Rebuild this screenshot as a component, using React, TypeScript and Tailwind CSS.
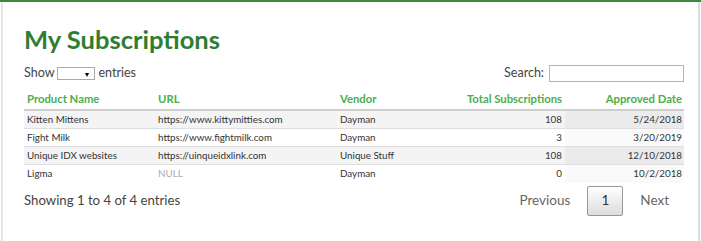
const rows = [
  { name: 'Kitten Mittens', url: 'https://www.kittymitties.com', vendor: 'Dayman', total: '108', date: '5/24/2018' },
  { name: 'Fight Milk', url: 'https://www.fightmilk.com', vendor: 'Dayman', total: '3', date: '3/20/2019' },
  { name: 'Unique IDX websites', url: 'https://uinqueidxlink.com', vendor: 'Unique Stuff', total: '108', date: '12/10/2018' },
  { name: 'Ligma', url: null, vendor: 'Dayman', total: '0', date: '10/2/2018' },
];

const App = () => {
  return (
    <div className="h-[241px] w-[701px] overflow-hidden bg-white font-['Lato',sans-serif] text-[#333]">
      <div className="h-[2px] w-full bg-[#3a8a3e]" />
      <div className="ml-[1px] mr-[1px] flex h-[239px] flex-col border-l-2 border-r-[2px] border-l-[#e6e6e6] border-r-[#dcdcdc] pl-[21px] pr-[14px]">
        <h1 className="mt-[23px] text-[25.5px] font-bold leading-[29px] text-[#2e7d32]">My Subscriptions</h1>

        <div className="mt-[9px] flex h-[20px] items-center justify-between text-[12.5px] text-[#444]">
          <div className="flex items-center">
            <span>Show</span>
            <div className="relative mx-[3px] mt-[1px] h-[13px] w-[38px] border border-[#a9a9a9] bg-white">
              <span className="absolute right-[4px] top-[1px] text-[7px] leading-[10px] text-black">▼</span>
            </div>
            <span>entries</span>
          </div>
          <div className="flex items-center">
            <span>Search:</span>
            <div className="ml-[5px] h-[17px] w-[135px] border border-[#b5b5b5] bg-white" />
          </div>
        </div>

        <table className="mt-[8px] w-[660px] table-fixed border-collapse text-[9.8px]">
          <colgroup>
            <col className="w-[131px]" />
            <col className="w-[182px]" />
            <col className="w-[110px]" />
            <col className="w-[118px]" />
            <col className="w-[119px]" />
          </colgroup>
          <thead>
            <tr className="border-b-2 border-[#cfcfcf] text-[11.3px] font-bold text-[#4cae50]">
              <th className="px-[3px] pb-[2px] text-left leading-[16px]">Product Name</th>
              <th className="px-[3px] pb-[2px] text-left leading-[16px]">URL</th>
              <th className="px-[3px] pb-[2px] text-left leading-[16px]">Vendor</th>
              <th className="px-[3px] pb-[2px] text-right leading-[16px]">Total Subscriptions</th>
              <th className="px-[2px] pb-[2px] text-right leading-[16px]">Approved Date</th>
            </tr>
          </thead>
          <tbody>
            {rows.map((row, i) => {
              const odd = i % 2 === 0;
              return (
                <tr key={row.name} className={`${i < rows.length - 1 ? 'border-b border-[#dedede]' : ''} ${odd ? 'bg-[#f4f4f4]' : 'bg-white'}`}>
                  <td className="h-[18px] px-[3px] leading-[17px]">{row.name}</td>
                  <td className="h-[18px] px-[3px] leading-[17px]">{row.url ?? <span className="text-[#aaa]">NULL</span>}</td>
                  <td className="h-[18px] px-[3px] leading-[17px]">{row.vendor}</td>
                  <td className="h-[18px] px-[3px] text-right leading-[17px]">{row.total}</td>
                  <td className={`h-[18px] px-[2px] text-right leading-[17px] ${odd ? 'bg-[#ebebeb]' : 'bg-[#fafafa]'}`}>{row.date}</td>
                </tr>
              );
            })}
          </tbody>
        </table>

        <div className="mt-[3px] flex items-center justify-between">
          <span className="text-[13.2px] text-[#444]">Showing 1 to 4 of 4 entries</span>
          <div className="flex items-center text-[13.5px] text-[#666]">
            <span className="px-[17px]">Previous</span>
            <span className="flex h-[30px] w-[36px] items-center justify-center rounded-[2px] border border-[#979797] bg-gradient-to-b from-white to-[#dcdcdc] text-[#333]">1</span>
            <span className="pl-[17px] pr-[15px]">Next</span>
          </div>
        </div>
      </div>
    </div>
  );
};

export default App;
